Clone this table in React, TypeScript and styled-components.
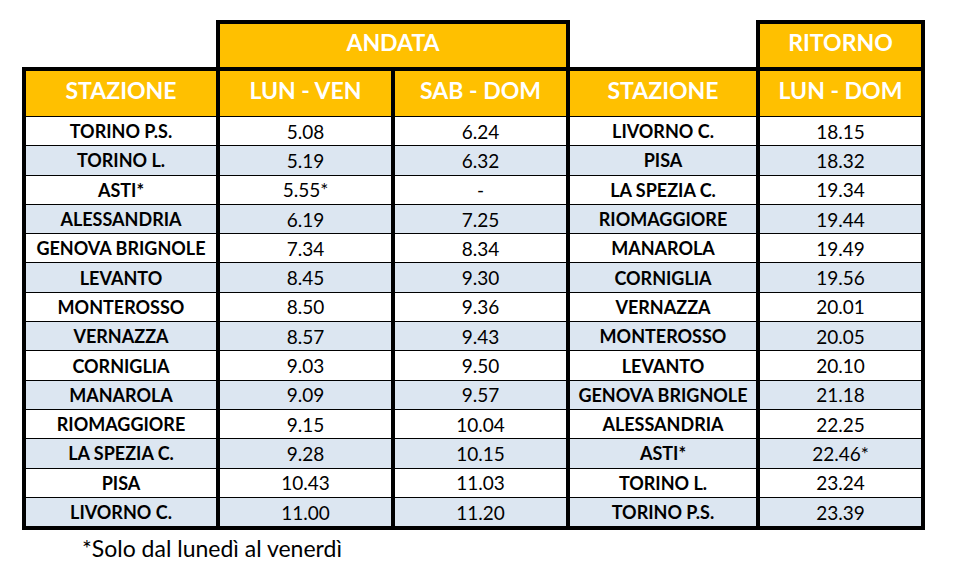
import React from 'react'
import styled, {createGlobalStyle} from 'styled-components'

const GlobalStyle = createGlobalStyle`
  html, body {
    margin: 0;
    padding: 0;
    background: #ffffff;
  }
  body {
    font-family: Lato, "Open Sans", "Liberation Sans", sans-serif;
    color: #111;
  }
`

const Page = styled.div`
  padding: 20px 0 0 22px;
`

const Table = styled.table`
  border-collapse: collapse;
  table-layout: fixed;
  width: 903px;
`

const Blank = styled.td`
  border: none;
  padding: 0;
`

const GroupHead = styled.th`
  background: #ffc000;
  color: #fff;
  font-size: 23px;
  font-weight: 700;
  height: 36px;
  padding: 0 0 7px;
  border: 4px solid #000;
  border-bottom: none;
  text-align: center;
`

const ColHead = styled.th`
  background: #ffc000;
  color: #fff;
  font-size: 23px;
  font-weight: 700;
  height: 37px;
  padding: 0 0 8px;
  border-top: 4px solid #000;
  border-left: 4px solid #000;
  border-right: 4px solid #000;
  border-bottom: 1px solid #000;
  text-align: center;
`

const Row = styled.tr<{$shade: boolean}>`
  background: ${p => (p.$shade ? '#dce6f1' : '#ffffff')};
`

const Cell = styled.td<{$bold?: boolean; $last?: boolean}>`
  height: 28.3px;
  padding: 0;
  font-size: ${p => (p.$bold ? '18px' : '19px')};
  font-weight: ${p => (p.$bold ? 700 : 400)};
  color: #000;
  text-align: center;
  border-left: 4px solid #000;
  border-right: 4px solid #000;
  border-bottom: ${p => (p.$last ? '4px' : '1px')} solid #000;
  white-space: nowrap;
`

const Note = styled.div`
  margin: 4px 0 0 60px;
  font-size: 23px;
  color: #000;
`

const rows: [string, string, string, string, string][] = [
  ['TORINO P.S.', '5.08', '6.24', 'LIVORNO C.', '18.15'],
  ['TORINO L.', '5.19', '6.32', 'PISA', '18.32'],
  ['ASTI*', '5.55*', '-', 'LA SPEZIA C.', '19.34'],
  ['ALESSANDRIA', '6.19', '7.25', 'RIOMAGGIORE', '19.44'],
  ['GENOVA BRIGNOLE', '7.34', '8.34', 'MANAROLA', '19.49'],
  ['LEVANTO', '8.45', '9.30', 'CORNIGLIA', '19.56'],
  ['MONTEROSSO', '8.50', '9.36', 'VERNAZZA', '20.01'],
  ['VERNAZZA', '8.57', '9.43', 'MONTEROSSO', '20.05'],
  ['CORNIGLIA', '9.03', '9.50', 'LEVANTO', '20.10'],
  ['MANAROLA', '9.09', '9.57', 'GENOVA BRIGNOLE', '21.18'],
  ['RIOMAGGIORE', '9.15', '10.04', 'ALESSANDRIA', '22.25'],
  ['LA SPEZIA C.', '9.28', '10.15', 'ASTI*', '22.46*'],
  ['PISA', '10.43', '11.03', 'TORINO L.', '23.24'],
  ['LIVORNO C.', '11.00', '11.20', 'TORINO P.S.', '23.39'],
]

export default function App() {
  return (
    <Page>
      <GlobalStyle />
      <Table>
        <colgroup>
          <col style={{width: 194}} />
          <col style={{width: 175}} />
          <col style={{width: 175}} />
          <col style={{width: 190}} />
          <col style={{width: 165}} />
        </colgroup>
        <thead>
          <tr>
            <Blank />
            <GroupHead colSpan={2}>ANDATA</GroupHead>
            <Blank />
            <GroupHead>RITORNO</GroupHead>
          </tr>
          <tr>
            <ColHead>STAZIONE</ColHead>
            <ColHead>LUN - VEN</ColHead>
            <ColHead>SAB - DOM</ColHead>
            <ColHead>STAZIONE</ColHead>
            <ColHead>LUN - DOM</ColHead>
          </tr>
        </thead>
        <tbody>
          {rows.map((r, i) => {
            const last = i === rows.length - 1
            return (
              <Row key={i} $shade={i % 2 === 1}>
                <Cell $bold $last={last}>{r[0]}</Cell>
                <Cell $last={last}>{r[1]}</Cell>
                <Cell $last={last}>{r[2]}</Cell>
                <Cell $bold $last={last}>{r[3]}</Cell>
                <Cell $last={last}>{r[4]}</Cell>
              </Row>
            )
          })}
        </tbody>
      </Table>
      <Note>*Solo dal lunedì al venerdì</Note>
    </Page>
  )
}
